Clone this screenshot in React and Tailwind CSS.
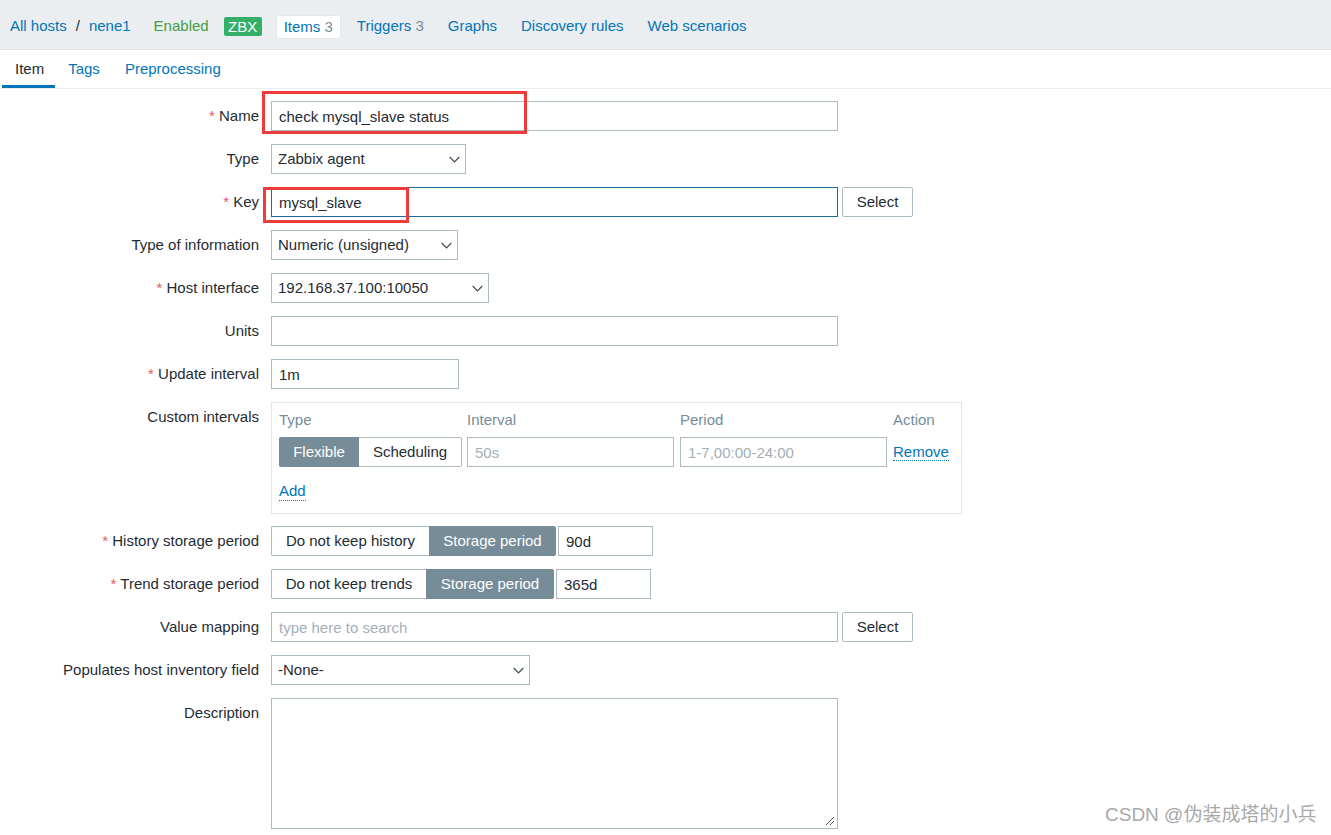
import React from "react";

const Chevron = () => (
  <svg width="11" height="7" viewBox="0 0 11 7" className="shrink-0">
    <polyline points="0.7,1 5.5,5.8 10.3,1" fill="none" stroke="#3d4c55" strokeWidth="1.2" />
  </svg>
);

function Row({ label, req, children, className = "" }) {
  return (
    <div className={"flex gap-[12px] mb-[13px] " + className}>
      <div className="w-[259px] shrink-0 text-right h-[30px] leading-[30px] whitespace-nowrap">
        {req && <span className="text-[#e45959]">* </span>}
        {label}
      </div>
      <div className="flex items-start">{children}</div>
    </div>
  );
}

function Input({ w, children, muted, blue, className = "" }) {
  return (
    <div
      className={
        "h-[30px] border px-[7px] leading-[29px] whitespace-nowrap overflow-hidden " +
        (blue ? "border-[#1f6aa0] " : "border-[#acbbc2] ") +
        (muted ? "text-[#a3b0b7] " : "text-[#1f2c33] ") +
        className
      }
      style={{ width: w }}
    >
      {children}
    </div>
  );
}

function Select({ w, children }) {
  return (
    <div
      className="h-[30px] border border-[#acbbc2] pl-[6px] pr-[5px] flex items-center justify-between whitespace-nowrap"
      style={{ width: w }}
    >
      <span className="pt-[1px]">{children}</span>
      <Chevron />
    </div>
  );
}

function Btn({ children }) {
  return (
    <div className="ml-[4px] w-[71px] h-[30px] border border-[#acbbc2] rounded-[2px] flex items-center justify-center text-[#1f2c33] pt-[1px]">
      {children}
    </div>
  );
}

export default function App() {
  return (
    <div className="relative w-[1331px] h-[835px] overflow-hidden bg-white text-[15px] text-[#1f2c33] font-['Liberation_Sans',Arial,sans-serif]">
      {/* top nav */}
      <div className="h-[50px] bg-[#ebeef0] border-b border-[#dde2e5] flex items-center pt-[4px] pl-[10px] whitespace-nowrap">
        <span className="text-[#0275b8]">All hosts</span>
        <span className="ml-[9px] text-[#1f2c33]">/</span>
        <span className="ml-[9px] text-[#0275b8]">nene1</span>
        <span className="ml-[23px] text-[#429e47]">Enabled</span>
        <span className="ml-[15px] h-[19px] w-[38px] bg-[#34af67] rounded-[2px] text-white flex items-center justify-center leading-none">
          ZBX
        </span>
        <div className="ml-[14px] flex items-center gap-[8px]">
          <span className="h-[24px] leading-[22px] px-[7px] bg-white border border-[#e3e7ea] rounded-[2px] text-[#0275b8]">
            Items <span className="text-[#768d99]">3</span>
          </span>
          <span className="px-[8px] text-[#0275b8]">
            Triggers <span className="text-[#768d99]">3</span>
          </span>
          <span className="px-[8px] text-[#0275b8]">Graphs</span>
          <span className="px-[8px] text-[#0275b8]">Discovery rules</span>
          <span className="px-[8px] text-[#0275b8]">Web scenarios</span>
        </div>
      </div>

      {/* tabs */}
      <div className="h-[39px] border-b border-[#ebeef0] flex pl-[2px]">
        <div className="pl-[13px] pr-[11px] h-[38px] leading-[38px] border-b-[3px] border-[#0275b8] text-[#1f2c33]">Item</div>
        <div className="px-[13px] h-[38px] leading-[38px] text-[#0275b8]">Tags</div>
        <div className="px-[12px] h-[38px] leading-[38px] text-[#0275b8]">Preprocessing</div>
      </div>

      {/* form */}
      <div className="pt-[12px]">
        <Row label="Name" req>
          <Input w={567}>check mysql_slave status</Input>
        </Row>
        <Row label="Type">
          <Select w={195}>Zabbix agent</Select>
        </Row>
        <Row label="Key" req>
          <Input w={567} blue>mysql_slave</Input>
          <Btn>Select</Btn>
        </Row>
        <Row label="Type of information">
          <Select w={187}>Numeric (unsigned)</Select>
        </Row>
        <Row label="Host interface" req>
          <Select w={218}>192.168.37.100:10050</Select>
        </Row>
        <Row label="Units">
          <Input w={567}></Input>
        </Row>
        <Row label="Update interval" req>
          <Input w={188}>1m</Input>
        </Row>
        <Row label="Custom intervals" className="!mb-[12px]">
          <div className="w-[691px] h-[112px] border border-[#e3e7ea] pl-[7px] pt-[4px]">
            <div className="flex h-[25px] leading-[25px] text-[#768d99]">
              <div className="w-[188px]">Type</div>
              <div className="w-[213px]">Interval</div>
              <div className="w-[213px]">Period</div>
              <div>Action</div>
            </div>
            <div className="flex mt-[5px] h-[30px]">
              <div className="w-[188px] flex">
                <div className="w-[80px] h-[30px] bg-[#768d99] text-white rounded-l-[2px] flex items-center justify-center pt-[1px]">
                  Flexible
                </div>
                <div className="w-[103px] h-[30px] border border-l-0 border-[#acbbc2] rounded-r-[2px] flex items-center justify-center pt-[1px]">
                  Scheduling
                </div>
              </div>
              <div className="w-[213px]">
                <Input w={207} muted>50s</Input>
              </div>
              <div className="w-[213px]">
                <Input w={207} muted>1-7,00:00-24:00</Input>
              </div>
              <div className="leading-[30px]">
                <span className="text-[#0275b8] border-b border-dotted border-[#0275b8] leading-[17px] inline-block">
                  Remove
                </span>
              </div>
            </div>
            <div className="mt-[13px]">
              <span className="text-[#0275b8] border-b border-dotted border-[#0275b8] leading-[18px] inline-block">
                Add
              </span>
            </div>
          </div>
        </Row>
        <Row label="History storage period" req>
          <div className="flex">
            <div className="w-[158px] h-[30px] border border-r-0 border-[#acbbc2] rounded-l-[2px] flex items-center justify-center pt-[1px]">
              Do not keep history
            </div>
            <div className="w-[127px] h-[30px] bg-[#768d99] text-white rounded-r-[2px] flex items-center justify-center pt-[1px]">
              Storage period
            </div>
          </div>
          <Input w={95} className="ml-[2px]">90d</Input>
        </Row>
        <Row label="Trend storage period" req>
          <div className="flex">
            <div className="w-[155px] h-[30px] border border-r-0 border-[#acbbc2] rounded-l-[2px] flex items-center justify-center pt-[1px]">
              Do not keep trends
            </div>
            <div className="w-[128px] h-[30px] bg-[#768d99] text-white rounded-r-[2px] flex items-center justify-center pt-[1px]">
              Storage period
            </div>
          </div>
          <Input w={95} className="ml-[2px]">365d</Input>
        </Row>
        <Row label="Value mapping">
          <Input w={567} muted>type here to search</Input>
          <Btn>Select</Btn>
        </Row>
        <Row label="Populates host inventory field">
          <Select w={259}>-None-</Select>
        </Row>
        <Row label="Description">
          <div className="relative w-[567px] h-[131px] border border-[#acbbc2]">
            <svg width="10" height="10" viewBox="0 0 10 10" className="absolute right-[2px] bottom-[2px]">
              <line x1="1" y1="9" x2="9" y2="1" stroke="#555" strokeWidth="1" />
              <line x1="5" y1="9" x2="9" y2="5" stroke="#555" strokeWidth="1" />
            </svg>
          </div>
        </Row>
      </div>

      {/* red annotation boxes */}
      <div className="absolute left-[262px] top-[91px] w-[265px] h-[43px] border-[3px] border-[#ef3b3b]" />
      <div className="absolute left-[263px] top-[187px] w-[146px] h-[36px] border-[3px] border-[#ef3b3b]" />

      {/* watermark */}
      <div className="absolute left-[1105px] top-[802px] text-[19px] leading-[26px] text-[#a8a8a8] whitespace-nowrap font-['Liberation_Sans','Noto_Sans_CJK_SC',sans-serif]">
        CSDN @伪装成塔的小兵
      </div>
    </div>
  );
}
